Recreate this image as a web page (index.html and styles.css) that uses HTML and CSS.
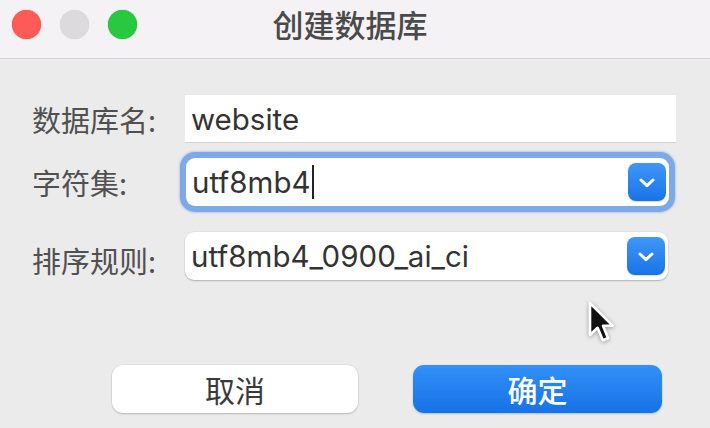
FILE: index.html
```html
<!DOCTYPE html>
<html lang="zh-CN">
<head>
<meta charset="utf-8">
<title>创建数据库</title>
<link rel="stylesheet" href="styles.css">
</head>
<body>
<div class="window">
  <header class="titlebar">
    <div class="lights">
      <span class="light light-close"></span>
      <span class="light light-min"></span>
      <span class="light light-max"></span>
    </div>
    <h1 class="title">创建数据库</h1>
    <div class="titlebar-spacer"></div>
  </header>

  <main class="form">
    <div class="row row-name">
      <label class="label">数据库名:</label>
      <div class="field field-text"><span class="value">website</span></div>
    </div>
    <div class="row row-charset">
      <label class="label">字符集:</label>
      <div class="field field-select is-focused">
        <span class="value">utf8mb4<span class="caret"></span></span>
        <span class="select-arrow">
          <svg viewBox="0 0 16 10" width="16" height="10"><path d="M2 2 L8 7.6 L14 2" fill="none" stroke="#fff" stroke-width="3" stroke-linecap="round" stroke-linejoin="round"/></svg>
        </span>
      </div>
    </div>
    <div class="row row-collation">
      <label class="label label-collation">排序规则:</label>
      <div class="field field-select">
        <span class="value">utf8mb4_0900_ai_ci</span>
        <span class="select-arrow">
          <svg viewBox="0 0 16 10" width="16" height="10"><path d="M2 2 L8 7.6 L14 2" fill="none" stroke="#fff" stroke-width="3" stroke-linecap="round" stroke-linejoin="round"/></svg>
        </span>
      </div>
    </div>
  </main>

  <footer class="actions">
    <button class="btn btn-cancel">取消</button>
    <button class="btn btn-primary">确定</button>
  </footer>

  <svg class="pointer" viewBox="-1.5 -1.5 14 22" width="28" height="44">
    <path d="M0 0 L0 16 L3.8 12.4 L6.4 18.6 L9 17.5 L6.5 11.4 L11.4 11.4 Z" fill="#111" stroke="#fff" stroke-width="1.3" stroke-linejoin="round"/>
  </svg>
</div>
</body>
</html>
```

FILE: styles.css
```css
* { box-sizing: border-box; }

html, body {
  margin: 0;
  padding: 0;
  width: 710px;
  height: 428px;
  overflow: hidden;
  background: #ebebeb;
}

.window {
  position: relative;
  width: 710px;
  height: 428px;
  background: #ebebeb;
  font-family: "Inter", "Noto Sans CJK SC", sans-serif;
  color: #333;
}

/* title bar */
.titlebar {
  height: 59px;
  background: #f4f2f5;
  border-bottom: 1px solid #d6d4d7;
  display: grid;
  grid-template-columns: 1fr auto 1fr;
  align-items: center;
}

.lights {
  display: flex;
  gap: 19px;
  padding-left: 12px;
  margin-top: -10px;
}

.light {
  width: 29px;
  height: 29px;
  border-radius: 50%;
  display: block;
}
.light-close { background: #fd5b57; box-shadow: 0 0 1px #e0443e; }
.light-min { background: #dcdadd; box-shadow: 0 0 1px #ccc; }
.light-max { background: #29c840; box-shadow: 0 0 1px #1aab29; }

.title {
  margin: -11px 10px 0 0;
  font-family: "Noto Sans CJK SC", sans-serif;
  font-size: 31px;
  font-weight: 500;
  line-height: 40px;
  color: #4a4a4a;
}

/* form */
.form {
  padding: 36px 0 0 32px;
  display: flex;
  flex-direction: column;
}

.row {
  display: flex;
  align-items: center;
}
.row-charset { margin-top: 16px; }
.row-collation { margin-top: 26px; }

.label {
  width: 153px;
  flex: none;
  font-family: "Noto Sans CJK SC", sans-serif;
  font-size: 29px;
  line-height: 36px;
  color: #505050;
}
.label-collation { margin-top: 8px; }

.field {
  position: relative;
  background: #fff;
  display: flex;
  align-items: center;
  height: 48px;
  padding-left: 6px;
  font-size: 29.5px;
  color: #333;
}

.field-text {
  width: 491px;
  height: 47px;
  box-shadow: 0 1px 0 #d0d0d0, 0 -0.5px 0 #e4e4e4;
}

.field-select {
  width: 483px;
  border-radius: 9px;
  box-shadow: 0 1px 1.5px rgba(0, 0, 0, 0.22), 0 0 0 0.5px rgba(0, 0, 0, 0.06);
}
.row-charset .field-select { margin-left: 1px; }

.field-select.is-focused {
  box-shadow: 0 0 0 6px #7fa9e6, 0 0 2px 7px rgba(127, 169, 230, 0.45);
}

.value {
  display: inline-flex;
  align-items: center;
  line-height: 36px;
  white-space: nowrap;
}

.caret {
  display: inline-block;
  width: 2px;
  height: 34px;
  margin-left: 1px;
  background: #222;
}

.select-arrow {
  position: absolute;
  right: 3px;
  top: 5px;
  width: 38px;
  height: 38px;
  border-radius: 8px;
  background: linear-gradient(#3f97f8, #1a73e6);
  display: flex;
  align-items: center;
  justify-content: center;
  box-shadow: 0 0.5px 1px rgba(0, 0, 0, 0.15);
}
.select-arrow svg { display: block; margin-top: 1px; }

/* buttons */
.actions {
  display: flex;
  gap: 55px;
  padding-left: 112px;
  margin-top: 85px;
}

.btn {
  height: 48px;
  border: none;
  border-radius: 11px;
  font-family: "Noto Sans CJK SC", sans-serif;
  font-size: 30px;
  line-height: 40px;
  padding: 0;
  cursor: default;
}

.btn-cancel {
  width: 246px;
  background: #fff;
  color: #3a3a3a;
  box-shadow: 0 1px 2px rgba(0, 0, 0, 0.2), 0 0 0 0.5px rgba(0, 0, 0, 0.06);
}

.btn-primary {
  width: 249px;
  background: linear-gradient(#3290f7, #1672e6);
  color: #fff;
  font-weight: 500;
  box-shadow: 0 1px 2px rgba(0, 60, 160, 0.25);
}

/* mouse pointer overlay */
.pointer {
  position: absolute;
  left: 587px;
  top: 300px;
  filter: drop-shadow(0 1px 2px rgba(0, 0, 0, 0.35));
}
```
